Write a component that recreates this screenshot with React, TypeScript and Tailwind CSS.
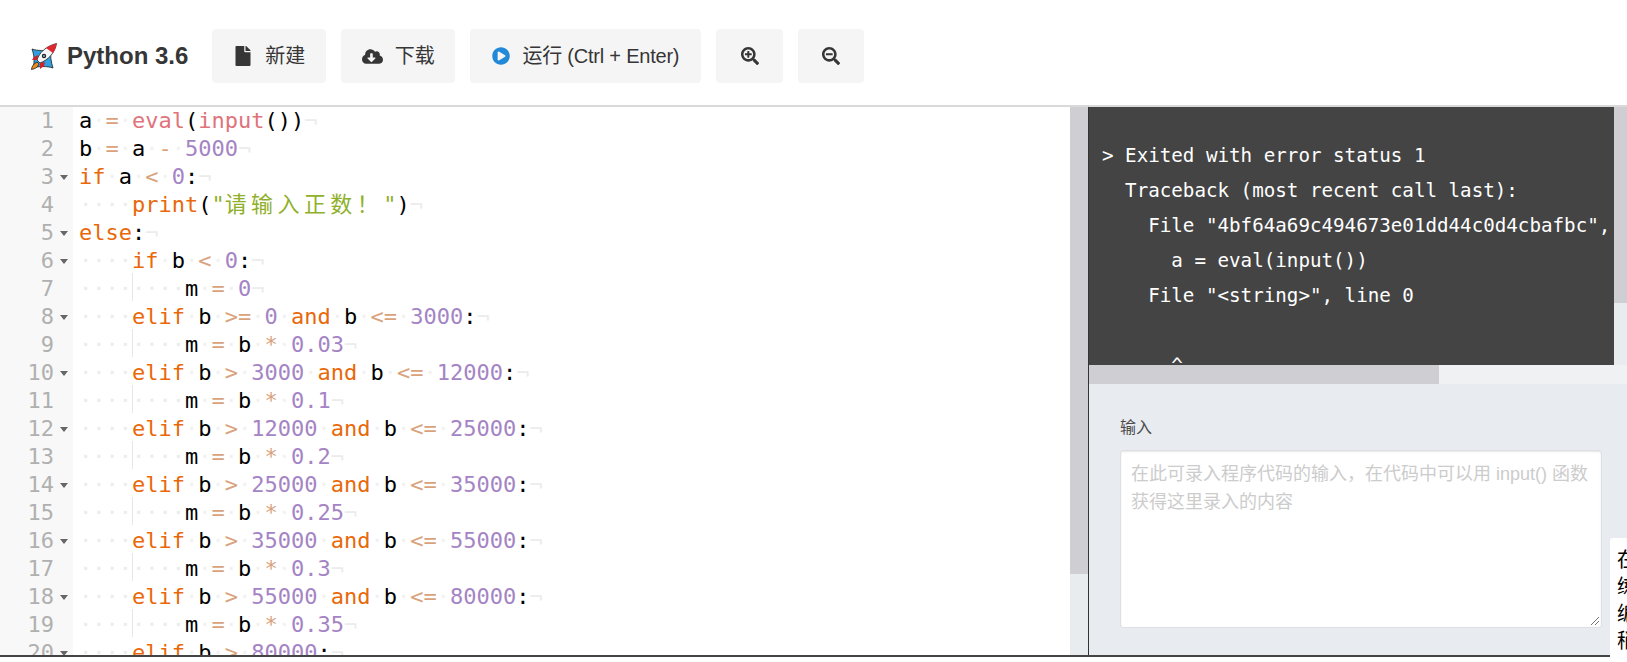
import React from "react";
import { FaFile, FaCloudDownloadAlt, FaPlayCircle, FaSearchPlus, FaSearchMinus } from "react-icons/fa";

const K = "text-[#e8680a]";
const O = "text-[#d9a27c]";
const N = "text-[#a484c4]";
const S = "text-[#8fb02a]";
const F = "text-[#e0737b]";
const P = "text-[#000000]";

type Tok = [string, string?];

const kw = (t: string): Tok => [t, K];
const op = (t: string): Tok => [t, O];
const num = (t: string): Tok => [t, N];
const sp: Tok = [" ", "ws"];

function branch(a: string, av: string, bv: string): Tok[] {
  return [kw("elif"), sp, ["b"], sp, op(a), sp, num(av), sp, kw("and"), sp, ["b"], sp, op("<="), sp, num(bv), [":"]];
}
function assign(v: string): Tok[] {
  return [["m"], sp, op("="), sp, ["b"], sp, op("*"), sp, num(v)];
}

const lines: { indent: number; fold?: boolean; toks: Tok[] }[] = [
  { indent: 0, toks: [["a"], sp, op("="), sp, ["eval", F], ["("], ["input", F], ["())"]] },
  { indent: 0, toks: [["b"], sp, op("="), sp, ["a"], sp, op("-"), sp, num("5000")] },
  { indent: 0, fold: true, toks: [kw("if"), sp, ["a"], sp, op("<"), sp, num("0"), [":"]] },
  { indent: 1, toks: [["print", K], ["("], ["\"", S], ["请输入正数！", "text-[#8fb02a] tracking-[4.4px]"], ["\"", S], [")"]] },
  { indent: 0, fold: true, toks: [kw("else"), [":"]] },
  { indent: 1, fold: true, toks: [kw("if"), sp, ["b"], sp, op("<"), sp, num("0"), [":"]] },
  { indent: 2, toks: [["m"], sp, op("="), sp, num("0")] },
  { indent: 1, fold: true, toks: branch(">=", "0", "3000") },
  { indent: 2, toks: assign("0.03") },
  { indent: 1, fold: true, toks: branch(">", "3000", "12000") },
  { indent: 2, toks: assign("0.1") },
  { indent: 1, fold: true, toks: branch(">", "12000", "25000") },
  { indent: 2, toks: assign("0.2") },
  { indent: 1, fold: true, toks: branch(">", "25000", "35000") },
  { indent: 2, toks: assign("0.25") },
  { indent: 1, fold: true, toks: branch(">", "35000", "55000") },
  { indent: 2, toks: assign("0.3") },
  { indent: 1, fold: true, toks: branch(">", "55000", "80000") },
  { indent: 2, toks: assign("0.35") },
  { indent: 1, fold: true, toks: [kw("elif"), sp, ["b"], sp, op(">"), sp, num("80000"), [":"]] },
];

function Rocket() {
  return (
    <svg width="27" height="27" viewBox="0 0 27 27" className="shrink-0">
      <path d="M2 6 C8 8 15 8 21 6 C20 12 21 19 23 25 C17 23 9 23 3 25 C5 18 4 12 2 6 Z" fill="#2f9fe0" stroke="#1d1d1d" strokeWidth="0.8" />
      <path d="M7 17 C9 10 16 3 26.5 0.5 C25 10 18 17 10 20 Z" fill="#f6f6f6" stroke="#222" strokeWidth="0.8" />
      <path d="M16 5 C19 3 23 1.5 26.5 0.5 C26 4 25 7 23 10 Z" fill="#e0262e" />
      <circle cx="14" cy="13" r="2.2" fill="#222" />
      <circle cx="14" cy="13" r="0.9" fill="#8cc8ee" />
      <path d="M7 19 L9 21 C8 24 5 26 1.5 26.5 C1.5 23.5 4 20.5 7 19 Z" fill="#f08a1d" stroke="#222" strokeWidth="0.8" />
      <path d="M8 12 L4 14 L2 17 L7 17 Z" fill="#d0202a" />
      <path d="M15 19 L14 23 L10 26 L10 20 Z" fill="#d0202a" />
    </svg>
  );
}

function Btn({ icon, children, className }: { icon: React.ReactNode; children?: React.ReactNode; className: string }) {
  return (
    <button className={`h-[54px] shrink-0 bg-[#f5f5f5] rounded-[4px] flex items-center justify-center gap-[12px] text-[20px] text-[#363636] ${className}`}>
      {icon}
      {children ? <span>{children}</span> : null}
    </button>
  );
}

function Code({ toks, indent }: { toks: Tok[]; indent: number }) {
  return (
    <div className="h-[28px] leading-[28px] whitespace-pre relative text-black">
      {indent > 0 ? <span className="text-[#ececec]">{"····"}</span> : null}
      {indent > 1 ? (
        <span className="text-[#ececec] relative">
          <span className="absolute left-0 top-[-3px] h-[28px] border-l border-[#e6e6e6]" />
          {"····"}
        </span>
      ) : null}
      {toks.map((t, i) =>
        t[1] === "ws" ? (
          <span key={i} className="text-[#f1f1f1]">·</span>
        ) : (
          <span key={i} className={t[1] ?? P}>{t[0]}</span>
        )
      )}
      <span className="text-[#ececec]">¬</span>
    </div>
  );
}

const term = [
  "> Exited with error status 1",
  "  Traceback (most recent call last):",
  "    File \"4bf64a69c494673e01dd44c0d4cbafbc\", line 1, in <module>",
  "      a = eval(input())",
  "    File \"<string>\", line 0",
  "",
  "      ^",
];

export default function App() {
  return (
    <div className="h-[662px] w-[1627px] overflow-hidden flex flex-col bg-white font-['Liberation_Sans','Noto_Sans_CJK_SC',sans-serif]">
      <header className="h-[105px] shrink-0 flex items-center pl-[30px] pt-[7px] bg-white">
        <Rocket />
        <span className="ml-[10px] mr-[24px] text-[24px] font-bold text-[#363636]">Python 3.6</span>
        <div className="flex items-center gap-[15px]">
          <Btn className="w-[114px]" icon={<FaFile className="text-[#363636] text-[20px]" />}>新建</Btn>
          <Btn className="w-[114px]" icon={<FaCloudDownloadAlt className="text-[#363636] text-[21px]" />}>下载</Btn>
          <Btn className="w-[231px] tracking-[-0.22px]" icon={<FaPlayCircle className="text-[#2288d8] text-[18px]" />}>运行 (Ctrl + Enter)</Btn>
          <Btn className="w-[67px]" icon={<FaSearchPlus className="text-[#363636] text-[18px]" />} />
          <Btn className="w-[66px]" icon={<FaSearchMinus className="text-[#363636] text-[18px]" />} />
        </div>
      </header>
      <div className="h-[2px] shrink-0 bg-[#d9d9d9]" />
      <main className="h-[548px] shrink-0 flex overflow-hidden">
        <section className="w-[1070px] shrink-0 flex overflow-hidden font-['DejaVu_Sans_Mono','Noto_Sans_CJK_SC',monospace] text-[22px]">
          <div className="w-[73px] shrink-0 bg-[#f8f8f8] text-[#b0b0b0]">
            {lines.map((l, i) => (
              <div key={i} className="h-[28px] leading-[28px] relative text-right pr-[19px]">
                {i + 1}
                {l.fold ? (
                  <span className="absolute right-[5px] top-[12px] w-0 h-0 border-l-[4px] border-r-[4px] border-t-[5px] border-l-transparent border-r-transparent border-t-[#666]" />
                ) : null}
              </div>
            ))}
          </div>
          <div className="flex-1 pl-[6px]">
            {lines.map((l, i) => (
              <Code key={i} toks={l.toks} indent={l.indent} />
            ))}
          </div>
        </section>
        <div className="w-[18px] shrink-0 flex flex-col bg-[#e9ecef]">
          <div className="h-[467px] bg-[#cfcfd3]" />
        </div>
        <section className="flex-1 min-w-0 flex flex-col border-l border-[#333] relative">
          <div className="h-[277px] shrink-0 flex flex-col">
            <div className="flex-1 min-h-0 flex">
              <div className="w-[525px] shrink-0 bg-[#444444] overflow-hidden pt-[31px] pl-[13px] font-['DejaVu_Sans_Mono',monospace] text-[19.2px] leading-[35px] text-white whitespace-pre">
                {term.map((t, i) => (
                  <div key={i} className="h-[35px]">{t}</div>
                ))}
              </div>
              <div className="flex-1 flex flex-col bg-[#e9ecef]">
                <div className="h-[196px] bg-[#cfcfd3]" />
              </div>
            </div>
            <div className="h-[19px] shrink-0 bg-[#f0f1f3] flex">
              <div className="w-[350px] bg-[#cfcfd3]" />
            </div>
          </div>
          <div className="flex-1 bg-[#e8ebef] pl-[31px] pt-[33px]">
            <div className="text-[16px] leading-[22px] text-[#4a4a4a]">输入</div>
            <div className="mt-[11px] w-[482px] h-[178px] bg-white rounded-[3px] border border-[#dcdfe3] shadow-[inset_0_1px_2px_rgba(10,10,10,0.1)] px-[10px] py-[9px] text-[18px] leading-[28px] text-[#cccccc] relative">
              在此可录入程序代码的输入，在代码中可以用 input() 函数获得这里录入的内容
              <svg width="10" height="10" viewBox="0 0 10 10" className="absolute right-[1px] bottom-[1px]">
                <path d="M1 9 L9 1 M5 9 L9 5" stroke="#777" strokeWidth="1" />
              </svg>
            </div>
          </div>
          <div className="absolute left-[521px] bottom-0 w-[200px] h-[117px] bg-white rounded-tl-[3px] pl-[7px] pt-[9px] text-[20px] leading-[27px] text-black whitespace-nowrap">
            在此处<br />练习代<br />编写程<br />稍后查
          </div>
        </section>
      </main>
      <div className="h-[2px] w-[1610px] shrink-0 bg-[#444444]" />
      <div className="flex-1 bg-white" />
    </div>
  );
}
